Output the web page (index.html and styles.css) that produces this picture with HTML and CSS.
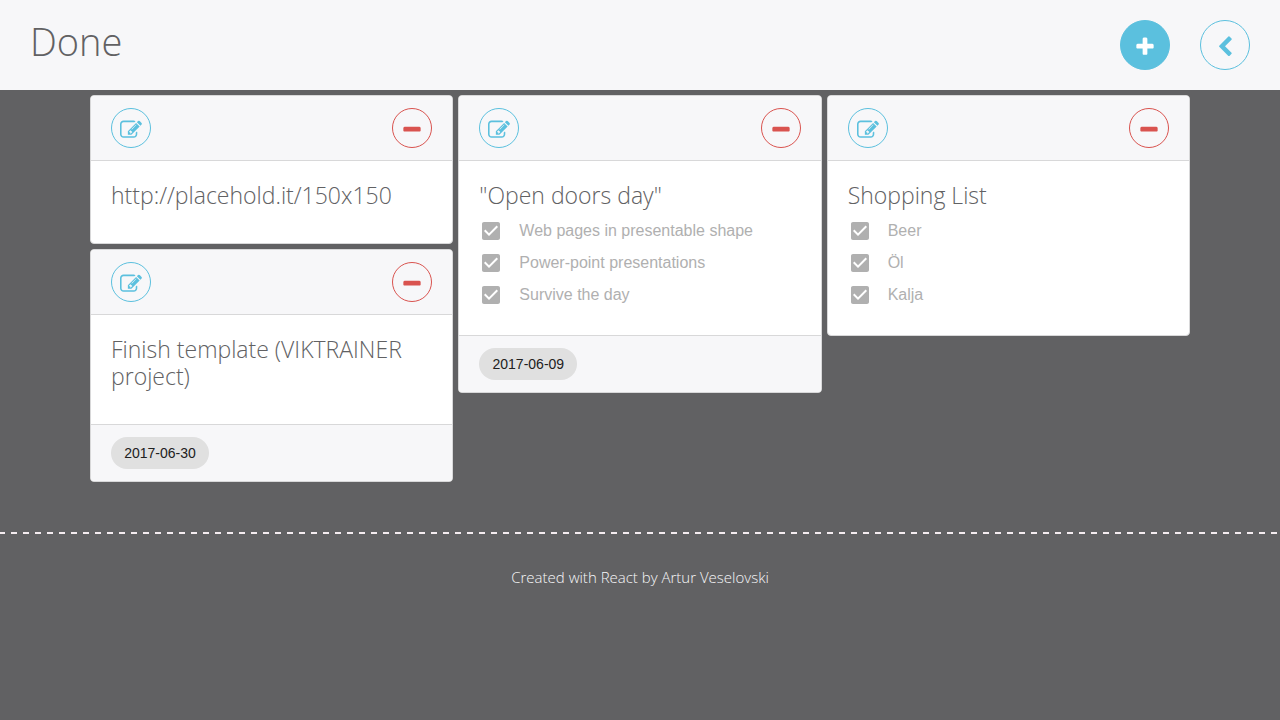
FILE: index.html
```
<!DOCTYPE html>
<html lang="en">
<head>
<meta charset="utf-8">
<meta name="viewport" content="width=device-width, initial-scale=1">
<title>Done</title>
<link rel="stylesheet" href="styles.css">
</head>
<body>
<svg class="sprite" aria-hidden="true">
  <symbol id="plus" viewBox="0 0 1792 1792"><path d="M1600 736v192q0 40-28 68t-68 28h-416v416q0 40-28 68t-68 28h-192q-40 0-68-28t-28-68v-416h-416q-40 0-68-28t-28-68v-192q0-40 28-68t68-28h416v-416q0-40 28-68t68-28h192q40 0 68 28t28 68v416h416q40 0 68 28t28 68z"/></symbol>
  <symbol id="minus" viewBox="0 0 1792 1792"><path d="M1600 736v192q0 40-28 68t-68 28h-1216q-40 0-68-28t-28-68v-192q0-40 28-68t68-28h1216q40 0 68 28t28 68z"/></symbol>
  <symbol id="back" viewBox="0 0 1792 1792"><path d="M1427 301l-531 531 531 531q19 19 19 45t-19 45l-166 166q-19 19-45 19t-45-19l-742-742q-19-19-19-45t19-45l742-742q19-19 45-19t45 19l166 166q19 19 19 45t-19 45z"/></symbol>
  <symbol id="edit" viewBox="0 0 1792 1792"><path d="M888 1184l116-116-152-152-116 116v56h96v96h56zm440-720q-16-16-33 1l-350 350q-17 17-1 33t33-1l350-350q17-17 1-33zm80 594v190q0 119-84.5 203.5t-203.5 84.5h-832q-119 0-203.5-84.5t-84.5-203.5v-832q0-119 84.5-203.5t203.5-84.5h832q63 0 117 25 15 7 18 23 3 17-9 29l-49 49q-14 14-32 8-23-6-45-6h-832q-66 0-113 47t-47 113v832q0 66 47 113t113 47h832q66 0 113-47t47-113v-126q0-13 9-22l64-64q15-15 35-7t20 29zm-96-738l288 288-672 672h-288v-288zm444 132l-92 92-288-288 92-92q28-28 68-28t68 28l152 152q28 28 28 68t-28 68z"/></symbol>
  <symbol id="tick" viewBox="0 0 24 24"><path d="M19 3H5c-1.11 0-2 .9-2 2v14c0 1.1.89 2 2 2h14c1.11 0 2-.9 2-2V5c0-1.1-.89-2-2-2zm-9 14l-5-5 1.41-1.41L10 14.17l7.59-7.59L19 8l-9 9z"/></symbol>
</svg>

<header class="topbar">
  <h1 class="topbar-title">Done</h1>
  <nav class="topbar-actions">
    <button type="button" class="btn btn-large btn-filled" aria-label="Add"><svg class="icon"><use href="#plus"/></svg></button>
    <button type="button" class="btn btn-large" aria-label="Back"><svg class="icon"><use href="#back"/></svg></button>
  </nav>
</header>

<main class="board">
  <div class="column">
    <article class="card">
      <div class="card-head">
        <button type="button" class="btn" aria-label="Edit"><svg class="icon"><use href="#edit"/></svg></button>
        <button type="button" class="btn btn-danger" aria-label="Remove"><svg class="icon"><use href="#minus"/></svg></button>
      </div>
      <div class="card-body"><h2 class="card-title">http://placehold.it/150x150</h2></div>
    </article>
    <article class="card">
      <div class="card-head">
        <button type="button" class="btn" aria-label="Edit"><svg class="icon"><use href="#edit"/></svg></button>
        <button type="button" class="btn btn-danger" aria-label="Remove"><svg class="icon"><use href="#minus"/></svg></button>
      </div>
      <div class="card-body"><h2 class="card-title">Finish template (VIKTRAINER project)</h2></div>
      <div class="card-foot"><time class="chip">2017-06-30</time></div>
    </article>
  </div>

  <div class="column">
    <article class="card">
      <div class="card-head">
        <button type="button" class="btn" aria-label="Edit"><svg class="icon"><use href="#edit"/></svg></button>
        <button type="button" class="btn btn-danger" aria-label="Remove"><svg class="icon"><use href="#minus"/></svg></button>
      </div>
      <div class="card-body">
        <h2 class="card-title">"Open doors day"</h2>
        <ul class="tasks">
          <li><label class="task"><span class="check"><input type="checkbox" checked disabled><svg><use href="#tick"/></svg></span>Web pages in presentable shape</label></li>
          <li><label class="task"><span class="check"><input type="checkbox" checked disabled><svg><use href="#tick"/></svg></span>Power-point presentations</label></li>
          <li><label class="task"><span class="check"><input type="checkbox" checked disabled><svg><use href="#tick"/></svg></span>Survive the day</label></li>
        </ul>
      </div>
      <div class="card-foot"><time class="chip">2017-06-09</time></div>
    </article>
  </div>

  <div class="column">
    <article class="card">
      <div class="card-head">
        <button type="button" class="btn" aria-label="Edit"><svg class="icon"><use href="#edit"/></svg></button>
        <button type="button" class="btn btn-danger" aria-label="Remove"><svg class="icon"><use href="#minus"/></svg></button>
      </div>
      <div class="card-body">
        <h2 class="card-title">Shopping List</h2>
        <ul class="tasks">
          <li><label class="task"><span class="check"><input type="checkbox" checked disabled><svg><use href="#tick"/></svg></span>Beer</label></li>
          <li><label class="task"><span class="check"><input type="checkbox" checked disabled><svg><use href="#tick"/></svg></span>Öl</label></li>
          <li><label class="task"><span class="check"><input type="checkbox" checked disabled><svg><use href="#tick"/></svg></span>Kalja</label></li>
        </ul>
      </div>
    </article>
  </div>
</main>

<footer class="footer">Created with React by Artur Veselovski</footer>
</body>
</html>
```
FILE: styles.css
```
* { box-sizing: border-box; }

body {
  margin: 0;
  background: #616163;
  color: #616163;
  font-family: "Segoe UI Light", "Open Sans", sans-serif;
  font-weight: 300;
}

.sprite { display: none; }

.topbar {
  display: flex;
  align-items: center;
  justify-content: space-between;
  padding: 20px 30px;
  background: #f7f7f9;
}

.topbar-title {
  margin: 0;
  font-size: 38px;
  font-weight: 300;
  line-height: 42px;
  padding-bottom: 8px;
}

.topbar-actions { display: flex; gap: 30px; }

.btn {
  display: flex;
  align-items: center;
  justify-content: center;
  width: 40px;
  height: 40px;
  padding: 3px 0 0;
  border: 1px solid currentColor;
  border-radius: 50%;
  background: transparent;
  color: #5bc0de;
  cursor: pointer;
}

.btn-large { width: 50px; height: 50px; }
.btn-filled { background: #5bc0de; border-color: #5bc0de; color: #fff; }
.btn-danger { color: #d9534f; }

.icon { width: 22px; height: 22px; fill: currentColor; }

.board {
  display: grid;
  grid-template-columns: repeat(3, minmax(0, 1fr));
  align-items: start;
  gap: 5px;
  max-width: 1100px;
  margin: 0 auto;
  padding-top: 5px;
}

.column { display: grid; gap: 5px; }

.card {
  border: 1px solid #d8d8d9;
  border-radius: 4px;
  background: #fff;
  overflow: hidden;
}

.card-head {
  display: flex;
  justify-content: space-between;
  padding: 12px 20px;
  border-bottom: 1px solid #d8d8d9;
  background: #f7f7f9;
}

.card-body { padding: 21px 20px 24px; }

.card-title {
  margin: 0 0 10px;
  font-size: 23px;
  font-weight: 300;
  line-height: 27px;
}

.card-title:not(:last-child) { margin-bottom: 6px; }

.card-foot {
  display: flex;
  padding: 12px 20px;
  border-top: 1px solid #d8d8d9;
  background: #f7f7f9;
}

.chip {
  min-width: 98px;
  padding: 0 12px;
  border-radius: 16px;
  background: #e0e0e0;
  color: #212121;
  font: 400 14px/32px "Liberation Sans", Arial, sans-serif;
  text-align: center;
}

.tasks { margin: 0; padding: 0; list-style: none; }

.task {
  display: flex;
  align-items: center;
  gap: 16px;
  height: 32px;
  color: #b0b0b0;
  font: 400 16px/34px "Liberation Sans", Arial, sans-serif;
}

.check { display: grid; width: 24px; height: 24px; }
.check input, .check svg { grid-area: 1 / 1; width: 24px; height: 24px; margin: 0; }
.check input { appearance: none; }
.check svg { fill: #b0b0b0; pointer-events: none; }

.footer {
  margin-top: 50px;
  padding: 33px 20px;
  background: repeating-linear-gradient(90deg, #f4ecf0 0 5px, transparent 5px 11px, #f4ecf0 11px 12px) 0 0 / 100% 2px no-repeat;
  color: #f7f7f9;
  font-size: 15px;
  line-height: 24px;
  text-align: center;
}
```
